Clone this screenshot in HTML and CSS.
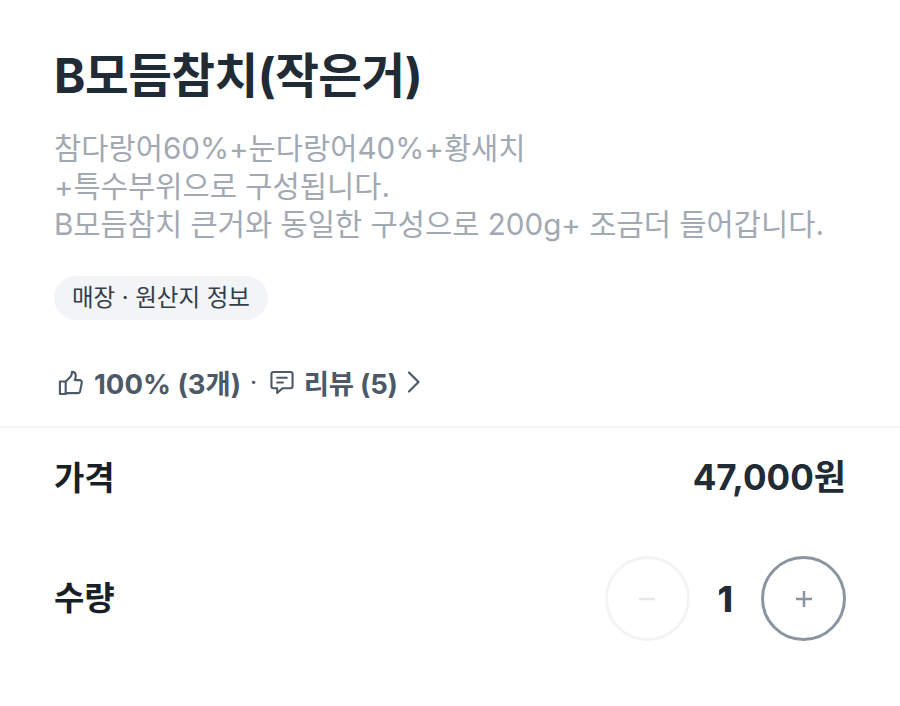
FILE: index.html

```html
<!DOCTYPE html>
<html lang="ko">
<head>
  <meta charset="UTF-8" />
  <title>B모듬참치(작은거)</title>
  <link rel="stylesheet" href="styles.css">
</head>
<body>
  <div class="info">
    <h1>B모듬참치(작은거)</h1>
    <p class="desc">참다랑어60%+눈다랑어40%+황새치<br>+특수부위으로 구성됩니다.<br>B모듬참치 큰거와 동일한 구성으로 200g+ 조금더 들어갑니다.</p>
    <span class="chip">매장 · 원산지 정보</span>
    <div class="review">
      <svg class="thumb" width="25" height="25" viewBox="0 0 26 26" fill="none" stroke="#4e5968" stroke-width="2.200" stroke-linejoin="round" stroke-linecap="round"><path d="M2 12h6v13H2z"/><path d="M8 12l5-5c1-1 1.500-2.500 1.500-5 2.500 0 4 1.500 4 4 0 1.500-.5 3-1 4.500h5c1.500 0 2.500 1.300 2.200 2.800l-1.700 8.700c-.3 1.300-1.200 2-2.500 2H8"/></svg>
      <b>100% (3개)</b>
      <span class="dot">·</span>
      <svg class="bubble" width="24" height="25" viewBox="0 0 25 25" fill="none" stroke="#4e5968" stroke-width="2.200" stroke-linejoin="round" stroke-linecap="round"><path d="M3.500 1.500h18c1 0 2 1 2 2v13c0 1-1 2-2 2H13l-5.500 5v-5h-4c-1 0-2-1-2-2v-13c0-1 1-2 2-2z"/><path d="M7.500 7.500h10M7.500 12.500h6"/></svg>
      <b class="tight">리뷰 (5)</b>
      <svg class="chevron" width="13" height="22" viewBox="0 0 13 22" fill="none" stroke="#4e5968" stroke-width="2.200" stroke-linecap="round" stroke-linejoin="round"><path d="M2 1.500l9.500 9.500L2 20.500"/></svg>
    </div>
  </div>
  <div class="rows">
    <div class="price-row">
      <span class="label">가격</span>
      <span class="price">47,000원</span>
    </div>
    <div class="qty-row">
      <span class="label">수량</span>
      <div class="stepper">
        <button class="step off" aria-label="minus"><svg width="18" height="18" viewBox="0 0 18 18" stroke="#e5e8eb" stroke-width="2.500"><path d="M1 9h16"/></svg></button>
        <span class="count">1</span>
        <button class="step" aria-label="plus"><svg width="18" height="18" viewBox="0 0 18 18" stroke="#8b95a1" stroke-width="2.500"><path d="M1 9h16M9 1v16"/></svg></button>
      </div>
    </div>
  </div>
</body>
</html>
```

FILE: styles.css

```css
body {
  margin: 0;
  font-family: "Inter", "Noto Sans CJK KR", sans-serif;
  background: #fff;
  color: #191f28;
}
.info {
  padding: 45px 54px 24px;
  border-bottom: 2px solid #f2f4f6;
}
h1 {
  margin: 0;
  font-size: 47.5px;
  line-height: 62px;
  font-weight: 700;
  color: #212b36;
  letter-spacing: -0.5px;
}
.desc {
  margin: 22px 0 0;
  font-size: 29.6px;
  line-height: 38px;
  color: #a2a9b2;
}
.chip {
  display: inline-block;
  margin-top: 33px;
  padding: 0 18px;
  height: 44px;
  line-height: 44px;
  border-radius: 22px;
  background: #f2f4f6;
  font-size: 23.5px;
  color: #333d4b;
}
.review {
  display: flex;
  align-items: center;
  gap: 9px;
  margin-top: 42px;
  padding-left: 4px;
  font-size: 27.5px;
  color: #4e5968;
}
.review .thumb {
  margin-right: 2px;
}
.review .bubble {
  margin: 0 1px 0 4px;
}
.review .tight {
  letter-spacing: -0.3px;
}
.review .chevron {
  margin-left: 1px;
}
.dot {
  font-weight: 700;
  font-size: 20px;
}
.rows {
  padding: 0 54px;
}
.price-row, .qty-row {
  display: flex;
  justify-content: space-between;
  align-items: center;
}
.price-row {
  height: 96px;
}
.qty-row {
  height: 85px;
  margin-top: 32px;
}
.label {
  font-size: 33px;
  font-weight: 700;
  color: #191f28;
}
.qty-row .label {
  padding-bottom: 6px;
}
.price {
  font-size: 35px;
  font-weight: 700;
  color: #212b36;
  padding-bottom: 4px;
}
.stepper {
  display: flex;
  align-items: center;
  gap: 28px;
}
.step {
  display: flex;
  align-items: center;
  justify-content: center;
  width: 85px;
  height: 85px;
  border-radius: 50%;
  border: 3px solid #8b95a1;
  background: #fff;
  padding: 0;
}
.step.off {
  border-color: #f2f4f6;
}
.count {
  font-size: 35px;
  font-weight: 800;
  color: #212b36;
}
```
